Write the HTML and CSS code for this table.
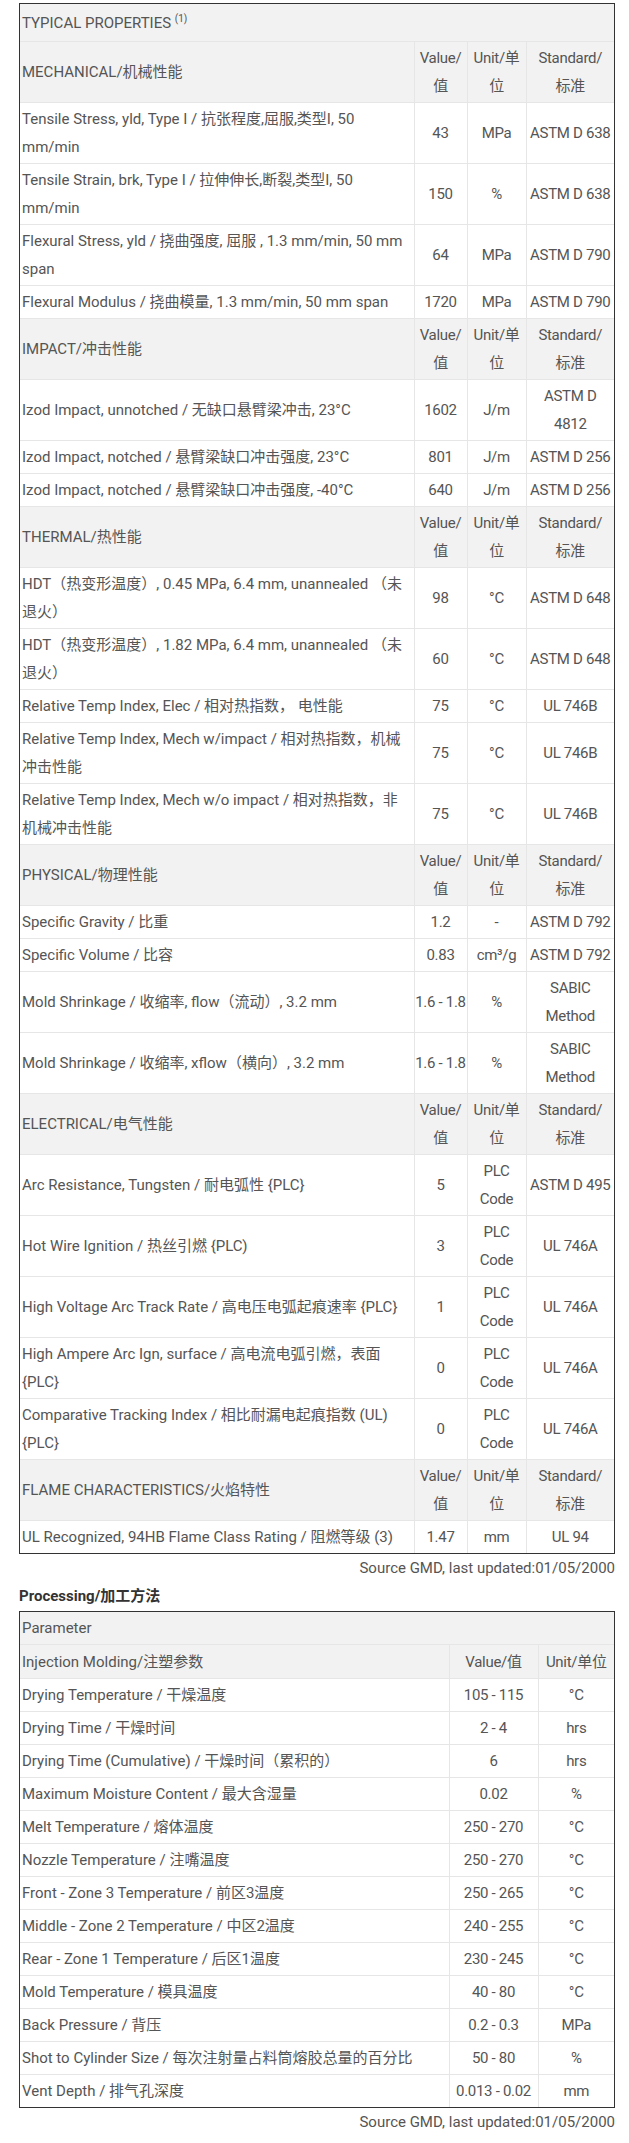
FILE: index.html
```html
<!DOCTYPE html>
<html lang="zh">
<head>
<meta charset="utf-8">
<title>Typical Properties</title>
<link rel="stylesheet" href="styles.css">
</head>
<body>
<div class="page">
  <div class="tbl-wrap">
    <table class="grid props">
      <colgroup><col class="p-name"><col class="p-val"><col class="p-unit"><col class="p-std"></colgroup>
      <tbody>
        <tr class="title"><td colspan="4">TYPICAL PROPERTIES <sup>(1)</sup></td></tr>

        <tr class="head"><td>MECHANICAL/机械性能</td><td>Value/值</td><td>Unit/单位</td><td>Standard/<br>标准</td></tr>
        <tr><td>Tensile Stress, yld, Type I / 抗张程度,屈服,类型I, 50 mm/min</td><td>43</td><td>MPa</td><td>ASTM D 638</td></tr>
        <tr><td>Tensile Strain, brk, Type I / 拉伸伸长,断裂,类型I, 50 mm/min</td><td>150</td><td>%</td><td>ASTM D 638</td></tr>
        <tr><td>Flexural Stress, yld / 挠曲强度, 屈服 , 1.3 mm/min, 50 mm span</td><td>64</td><td>MPa</td><td>ASTM D 790</td></tr>
        <tr><td>Flexural Modulus / 挠曲模量, 1.3 mm/min, 50 mm span</td><td>1720</td><td>MPa</td><td>ASTM D 790</td></tr>

        <tr class="head"><td>IMPACT/冲击性能</td><td>Value/值</td><td>Unit/单位</td><td>Standard/<br>标准</td></tr>
        <tr><td>Izod Impact, unnotched / 无缺口悬臂梁冲击, 23°C</td><td>1602</td><td>J/m</td><td>ASTM D 4812</td></tr>
        <tr><td>Izod Impact, notched / 悬臂梁缺口冲击强度, 23°C</td><td>801</td><td>J/m</td><td>ASTM D 256</td></tr>
        <tr><td>Izod Impact, notched / 悬臂梁缺口冲击强度, -40°C</td><td>640</td><td>J/m</td><td>ASTM D 256</td></tr>

        <tr class="head"><td>THERMAL/热性能</td><td>Value/值</td><td>Unit/单位</td><td>Standard/<br>标准</td></tr>
        <tr><td>HDT（热变形温度）, 0.45 MPa, 6.4 mm, unannealed （未退火）</td><td>98</td><td>°C</td><td>ASTM D 648</td></tr>
        <tr><td>HDT（热变形温度）, 1.82 MPa, 6.4 mm, unannealed （未退火）</td><td>60</td><td>°C</td><td>ASTM D 648</td></tr>
        <tr><td>Relative Temp Index, Elec / 相对热指数， 电性能</td><td>75</td><td>°C</td><td>UL 746B</td></tr>
        <tr><td>Relative Temp Index, Mech w/impact / 相对热指数，机械冲击性能</td><td>75</td><td>°C</td><td>UL 746B</td></tr>
        <tr><td>Relative Temp Index, Mech w/o impact / 相对热指数，非机械冲击性能</td><td>75</td><td>°C</td><td>UL 746B</td></tr>

        <tr class="head"><td>PHYSICAL/物理性能</td><td>Value/值</td><td>Unit/单位</td><td>Standard/<br>标准</td></tr>
        <tr><td>Specific Gravity / 比重</td><td>1.2</td><td>-</td><td>ASTM D 792</td></tr>
        <tr><td>Specific Volume / 比容</td><td>0.83</td><td>cm³/g</td><td>ASTM D 792</td></tr>
        <tr><td>Mold Shrinkage / 收缩率, flow（流动）, 3.2 mm</td><td>1.6 - 1.8</td><td>%</td><td>SABIC Method</td></tr>
        <tr><td>Mold Shrinkage / 收缩率, xflow（横向）, 3.2 mm</td><td>1.6 - 1.8</td><td>%</td><td>SABIC Method</td></tr>

        <tr class="head"><td>ELECTRICAL/电气性能</td><td>Value/值</td><td>Unit/单位</td><td>Standard/<br>标准</td></tr>
        <tr><td>Arc Resistance, Tungsten / 耐电弧性 {PLC}</td><td>5</td><td>PLC Code</td><td>ASTM D 495</td></tr>
        <tr><td>Hot Wire Ignition / 热丝引燃 {PLC)</td><td>3</td><td>PLC Code</td><td>UL 746A</td></tr>
        <tr><td>High Voltage Arc Track Rate / 高电压电弧起痕速率 {PLC}</td><td>1</td><td>PLC Code</td><td>UL 746A</td></tr>
        <tr><td>High Ampere Arc Ign, surface / 高电流电弧引燃，表面 {PLC}</td><td>0</td><td>PLC Code</td><td>UL 746A</td></tr>
        <tr><td>Comparative Tracking Index / 相比耐漏电起痕指数 (UL) {PLC}</td><td>0</td><td>PLC Code</td><td>UL 746A</td></tr>

        <tr class="head"><td>FLAME CHARACTERISTICS/火焰特性</td><td>Value/值</td><td>Unit/单位</td><td>Standard/<br>标准</td></tr>
        <tr><td>UL Recognized, 94HB Flame Class Rating / 阻燃等级 (3)</td><td>1.47</td><td>mm</td><td>UL 94</td></tr>
      </tbody>
    </table>
  </div>
  <p class="source">Source GMD, last updated:01/05/2000</p>

  <h3 class="section-title">Processing/加工方法</h3>
  <div class="tbl-wrap">
    <table class="grid proc">
      <colgroup><col class="q-name"><col class="q-val"><col class="q-unit"></colgroup>
      <tbody>
        <tr class="title param"><td colspan="3">Parameter</td></tr>
        <tr class="head single"><td>Injection Molding/注塑参数</td><td>Value/值</td><td>Unit/单位</td></tr>
        <tr><td>Drying Temperature / 干燥温度</td><td>105 - 115</td><td>°C</td></tr>
        <tr><td>Drying Time / 干燥时间</td><td>2 - 4</td><td>hrs</td></tr>
        <tr><td>Drying Time (Cumulative) / 干燥时间（累积的）</td><td>6</td><td>hrs</td></tr>
        <tr><td>Maximum Moisture Content / 最大含湿量</td><td>0.02</td><td>%</td></tr>
        <tr><td>Melt Temperature / 熔体温度</td><td>250 - 270</td><td>°C</td></tr>
        <tr><td>Nozzle Temperature / 注嘴温度</td><td>250 - 270</td><td>°C</td></tr>
        <tr><td>Front - Zone 3 Temperature / 前区3温度</td><td>250 - 265</td><td>°C</td></tr>
        <tr><td>Middle - Zone 2 Temperature / 中区2温度</td><td>240 - 255</td><td>°C</td></tr>
        <tr><td>Rear - Zone 1 Temperature / 后区1温度</td><td>230 - 245</td><td>°C</td></tr>
        <tr><td>Mold Temperature / 模具温度</td><td>40 - 80</td><td>°C</td></tr>
        <tr><td>Back Pressure / 背压</td><td>0.2 - 0.3</td><td>MPa</td></tr>
        <tr><td>Shot to Cylinder Size / 每次注射量占料筒熔胶总量的百分比</td><td>50 - 80</td><td>%</td></tr>
        <tr><td>Vent Depth / 排气孔深度</td><td>0.013 - 0.02</td><td>mm</td></tr>
      </tbody>
    </table>
  </div>
  <p class="source">Source GMD, last updated:01/05/2000</p>
</div>
</body>
</html>
```

FILE: styles.css
```css
html, body {
  margin: 0;
  padding: 0;
  background: #ffffff;
}

body {
  font-family: Roboto, "Liberation Sans", "Noto Sans CJK SC", sans-serif;
  font-size: 15px;
  color: #555555;
}

.page {
  width: 596px;
  padding: 3px 0 0 19px;
}

.tbl-wrap {
  border: 1px solid #333333;
}

.grid {
  width: 100%;
  border-collapse: collapse;
  border-style: hidden;
  table-layout: fixed;
}

.grid td {
  border: 1px solid #e6e6e6;
  padding: 2px 0;
  line-height: 28px;
  text-align: center;
  vertical-align: middle;
  letter-spacing: -0.3px;
}

.grid td:first-child {
  text-align: left;
  padding: 2px 3px 2px 2px;
  letter-spacing: 0;
}

.props td:last-child {
  padding-left: 2px;
  padding-right: 2px;
}

.grid .head td,
.grid .title td {
  background: #f2f2f2;
}

.grid .title td {
  padding: 5px 2px 4px;
}

.grid .title.param td {
  padding: 2px 2px 2px;
}

.grid .head.single td {
  padding-top: 3px;
}

.title sup {
  font-size: 10px;
  line-height: 0;
  vertical-align: 6px;
}

.p-name { width: 394px; }
.p-val { width: 53px; }
.p-unit { width: 59px; }
.p-std { width: 88px; }

.q-name { width: 429px; }
.q-val { width: 89px; }
.q-unit { width: 76px; }

.source {
  margin: 0;
  text-align: right;
  line-height: 28px;
  color: #555555;
}

.section-title {
  margin: 0 0 1px;
  font-size: 15px;
  line-height: 28px;
  font-weight: bold;
  color: #333333;
}
```
